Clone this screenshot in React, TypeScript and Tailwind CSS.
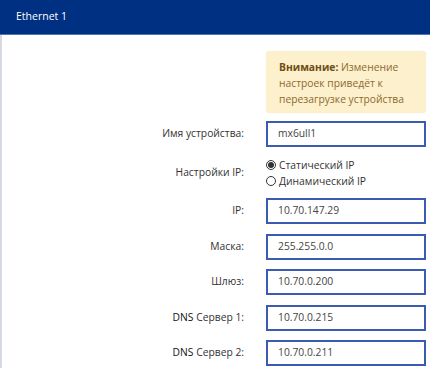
export default function App() {
  const fields = [
    { label: "IP:", value: "10.70.147.29" },
    { label: "Маска:", value: "255.255.0.0" },
    { label: "Шлюз:", value: "10.70.0.200" },
    { label: "DNS Сервер 1:", value: "10.70.0.215", dns: true },
    { label: "DNS Сервер 2:", value: "10.70.0.211", dns: true },
  ];

  return (
    <div className="w-[430px] h-[368px] overflow-hidden bg-white text-[10.3px] text-[#333]" style={{ fontFamily: '"Open Sans", "Noto Sans", sans-serif' }}>
      {/* Header */}
      <div className="h-[35px] bg-[#003082] border-b border-[#5671b8] flex items-center px-4 text-white text-[10.5px]">
        Ethernet 1
      </div>

      <div className="border-l-2 border-[#d5d9e0] h-full pt-4">
        {/* Warning */}
        <div className="ml-[264px] w-[160px] bg-[#fdf0cd] rounded-sm shadow-[0_0_1px_rgba(0,0,0,0.15)] px-[13px] pt-[8px] pb-[6px] leading-4 text-[#8d6a2e]">
          <span className="font-bold text-[#6e4d12]">Внимание:</span> Изменение настроек приведёт к перезагрузке устройства
        </div>

        <div className="flex flex-col gap-[9.5px] mt-2">
          {/* Device name */}
          <div className="flex items-center">
            <div className="w-[242px] text-right">Имя устройства:</div>
            <div className="ml-[22px] w-[160px] h-[26px] border-2 border-[#3a5bb0] flex items-center px-[10px] text-[#444]">
              mx6ull1
            </div>
          </div>

          {/* IP settings */}
          <div className="flex items-center">
            <div className="w-[242px] text-right">Настройки IP:</div>
            <div className="ml-[22px] flex flex-col leading-4">
              <label className="flex items-center gap-[3px]">
                <span className="w-[10px] h-[10px] rounded-full border border-[#333] flex items-center justify-center">
                  <span className="w-[6px] h-[6px] rounded-full bg-[#333]" />
                </span>
                Статический IP
              </label>
              <label className="flex items-center gap-[3px]">
                <span className="w-[10px] h-[10px] rounded-full border border-[#333]" />
                Динамический IP
              </label>
            </div>
          </div>

          {fields.map((f) => (
            <div key={f.label} className="flex items-center">
              <div className="w-[242px] text-right">
                {f.dns ? (
                  <>
                    <span className="text-[#111]">DNS</span> {f.label.slice(4)}
                  </>
                ) : (
                  f.label
                )}
              </div>
              <div className="ml-[22px] w-[160px] h-[26px] border-2 border-[#3a5bb0] flex items-center px-[10px] text-[#444]">
                {f.value}
              </div>
            </div>
          ))}
        </div>
      </div>
    </div>
  );
}
